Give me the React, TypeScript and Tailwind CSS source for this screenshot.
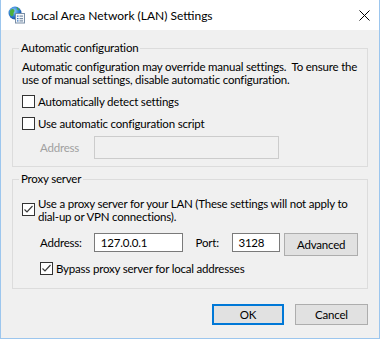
import React from "react";

const font = { fontFamily: 'Lato, "Noto Sans", sans-serif' };

function Check({ checked }: { checked?: boolean }) {
  return (
    <div className="w-[13px] h-[13px] shrink-0 border border-[#333333] bg-white flex items-center justify-center">
      {checked && (
        <svg width="11" height="11" viewBox="0 0 11 11">
          <path d="M1.5 5.5 L4 8 L9.5 2" fill="none" stroke="#3c3c3c" strokeWidth="1.2" />
        </svg>
      )}
    </div>
  );
}

function Icon() {
  return (
    <svg width="18" height="18" viewBox="0 0 18 18">
      <defs>
        <radialGradient id="g" cx="40%" cy="35%" r="65%">
          <stop offset="0%" stopColor="#9fd3ff" />
          <stop offset="60%" stopColor="#2f7fd6" />
          <stop offset="100%" stopColor="#1a4f9e" />
        </radialGradient>
      </defs>
      <circle cx="7" cy="7" r="6.5" fill="url(#g)" />
      <path d="M2.5 4 C4 2.5 6 3 6.5 4.5 C7 6 5 6.5 5.5 8 C6 9.5 4 11 3 10 C1.5 8.5 1.5 5.5 2.5 4 Z" fill="#4caf3c" />
      <path d="M8.5 1.2 C10 1.8 11.5 3 11 4.2 C10 4.6 9 3.5 8.5 1.2 Z" fill="#4caf3c" />
      <rect x="7.5" y="7.5" width="9" height="9.5" fill="#f4f8fc" stroke="#7a8ea6" strokeWidth="1" />
      <rect x="9" y="9.5" width="1.5" height="1.2" fill="#2f6fc0" />
      <rect x="11.5" y="9.5" width="3.5" height="1.2" fill="#7a8ea6" />
      <rect x="9" y="12" width="1.5" height="1.2" fill="#2f6fc0" />
      <rect x="11.5" y="12" width="3.5" height="1.2" fill="#7a8ea6" />
      <rect x="9" y="14.3" width="1.5" height="1.2" fill="#2f6fc0" />
      <rect x="11.5" y="14.3" width="3.5" height="1.2" fill="#7a8ea6" />
    </svg>
  );
}

export default function App() {
  return (
    <div
      className="w-[380px] h-[339px] border-l border-r border-b border-[#9cc6ee] bg-[#f0f0f0] flex flex-col text-[11.5px] leading-[13px] tracking-[-0.2px] text-black whitespace-nowrap overflow-hidden"
      style={font}
    >
      <div className="h-[30px] bg-white flex items-center pl-[7px] pr-[9px] shrink-0">
        <Icon />
        <span className="ml-[5px] text-[12px] tracking-normal flex-1">Local Area Network (LAN) Settings</span>
        <svg width="11" height="11" viewBox="0 0 11 11">
          <path d="M0.5 0.5 L10.5 10.5 M10.5 0.5 L0.5 10.5" stroke="#000" strokeWidth="1" />
        </svg>
      </div>

      <div className="flex flex-col px-[11px]">
        <fieldset className="mt-[10px] border border-[#dcdcdc] pl-[9px] pr-[9px] pb-[7px] min-w-0">
          <legend className="ml-[-3px] px-[2px] leading-[16px]">Automatic configuration</legend>
          <div className="mt-[4px]">
            <span className="whitespace-pre">Automatic configuration may override manual settings.  To ensure the</span>
            <br />
            use of manual settings, disable automatic configuration.
          </div>
          <div className="mt-[9px] flex items-center h-[13px]">
            <Check />
            <span className="ml-[3px]">Automatically detect settings</span>
          </div>
          <div className="mt-[9px] flex items-center h-[13px]">
            <Check />
            <span className="ml-[3px]">Use automatic configuration script</span>
          </div>
          <div className="mt-[6px] flex items-center pl-[18px]">
            <span className="w-[54px] text-[#a0a0a0]">Address</span>
            <div className="w-[185px] h-[23px] border border-[#cccccc] bg-[#f0f0f0]" />
          </div>
        </fieldset>

        <fieldset className="mt-[4px] border border-[#dcdcdc] pl-[9px] pr-[9px] pb-[13px] min-w-0">
          <legend className="ml-[-3px] px-[2px] leading-[16px]">Proxy server</legend>
          <div className="mt-[10px] flex items-start">
            <div className="mt-[6px]">
              <Check checked />
            </div>
            <span className="ml-[3px]">
              Use a proxy server for your LAN (These settings will not apply to
              <br />
              dial-up or VPN connections).
            </span>
          </div>
          <div className="mt-[10px] flex items-start pl-[18px]">
            <span className="w-[54px] mt-[3px]">Address:</span>
            <div className="w-[89px] h-[19px] border border-[#7a7a7a] bg-white pl-[6px] flex items-center">127.0.0.1</div>
            <span className="ml-[13px] w-[37px] mt-[3px]">Port:</span>
            <div className="w-[48px] h-[19px] border border-[#7a7a7a] bg-white pl-[5px] flex items-center">3128</div>
            <div className="ml-[4px] w-[74px] h-[23px] border border-[#adadad] bg-[#e1e1e1] flex items-center justify-center">Advanced</div>
          </div>
          <div className="mt-[6px] flex items-center h-[13px] pl-[18px]">
            <Check checked />
            <span className="ml-[3px]">Bypass proxy server for local addresses</span>
          </div>
        </fieldset>

        <div className="mt-[15px] flex justify-end gap-[11px]">
          <div className="w-[72px] h-[21px] border-2 border-[#0078d7] bg-[#e1e1e1] flex items-center justify-center">OK</div>
          <div className="w-[73px] h-[21px] border border-[#adadad] bg-[#e1e1e1] flex items-center justify-center">Cancel</div>
        </div>
      </div>
    </div>
  );
}
